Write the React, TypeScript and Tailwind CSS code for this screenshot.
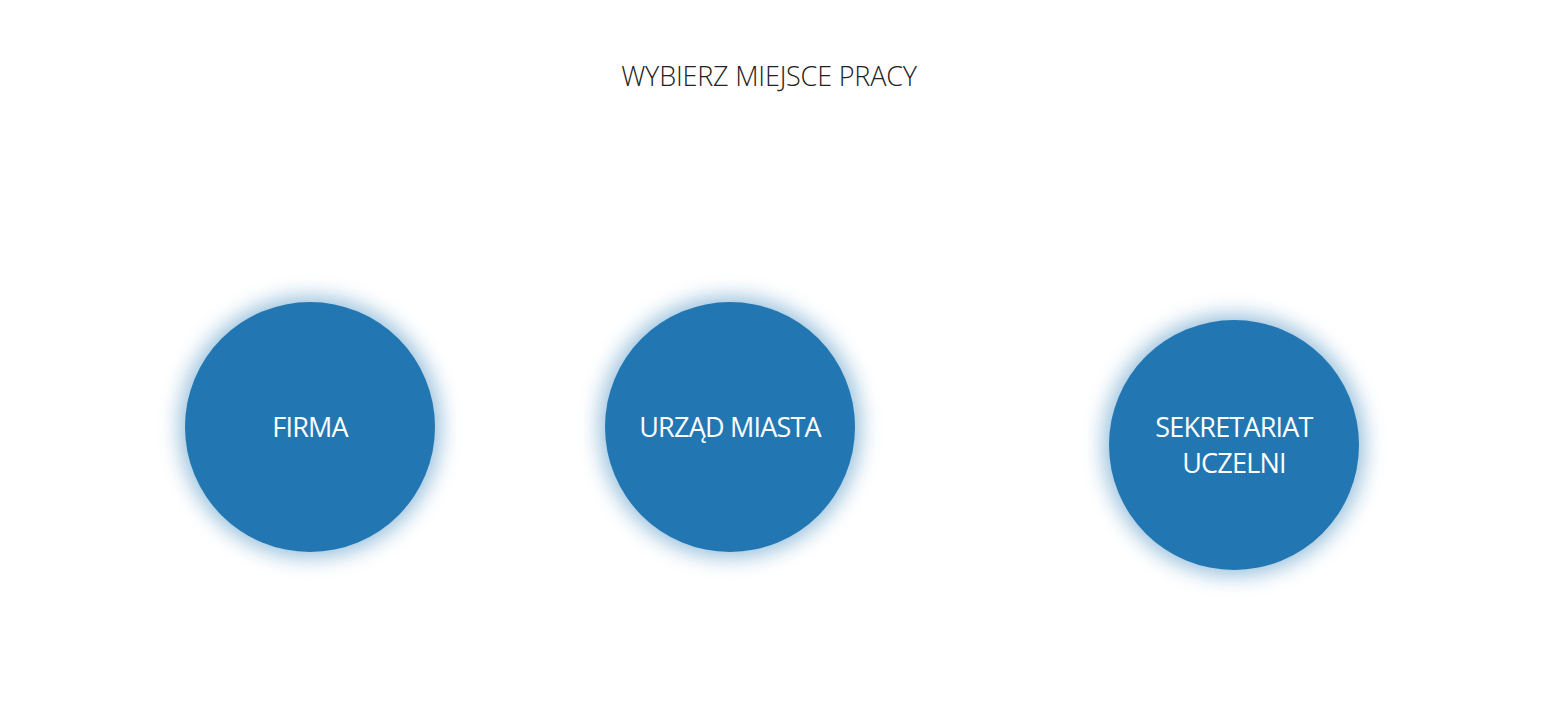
import React from 'react';

const places = [
  { id: 'firma', label: 'FIRMA', offset: 'ml-[185px]' },
  { id: 'urzad', label: 'URZĄD MIASTA', offset: 'ml-[170px]' },
  { id: 'uczelnia', label: 'SEKRETARIAT UCZELNI', offset: 'ml-[254px]' },
];

export default function App() {
  return (
    <div className="w-[1556px] h-[717px] bg-white font-['Open_Sans',sans-serif]">
      {/* Heading */}
      <h1 className="pt-[58px] pr-[18px] text-center text-[27px] leading-[36px] font-light text-[#222] tracking-[-0.2px]">
        WYBIERZ MIEJSCE PRACY
      </h1>

      {/* Circles, aligned on first text line */}
      <div className="mt-[208px] flex items-baseline">
        {places.map((p) => (
          <button
            key={p.id}
            className={`${p.offset} w-[250px] h-[250px] shrink-0 rounded-full bg-[#2277b3] shadow-[0_0_20px_6px_rgba(34,119,179,0.45)] flex items-center justify-center px-7 text-center text-white text-[27px] leading-[36px] tracking-[-0.8px]`}
          >
            {p.label}
          </button>
        ))}
      </div>
    </div>
  );
}
